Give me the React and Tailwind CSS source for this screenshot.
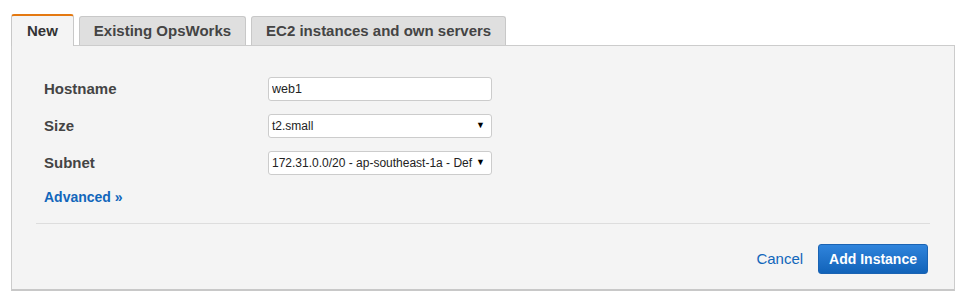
const TABS = ["New", "Existing OpsWorks", "EC2 instances and own servers"];

function Field({ label, children }) {
  return (
    <div className="flex items-center h-[24px]">
      <div className="w-[224px] text-[15px] font-bold text-[#444]">{label}</div>
      {children}
    </div>
  );
}

function Select({ value }) {
  return (
    <div className="w-[224px] h-[24px] bg-white border border-[#cccccc] rounded-[3px] flex items-center pl-[3px] pr-[6px] text-[12px] text-[#222]">
      <span className="flex-1 whitespace-nowrap">{value}</span>
      <span className="text-[9px] text-black">▼</span>
    </div>
  );
}

export default function App() {
  return (
    <div className="w-[971px] h-[303px] bg-white font-['Liberation_Sans',Arial,sans-serif]">
      {/* Tabs */}
      <div className="flex items-end gap-[5px] pl-[11px] pt-[14px]">
        {TABS.map((t, i) =>
          i === 0 ? (
            <div
              key={t}
              className="relative z-10 -mb-px h-[32px] px-[15px] flex items-center bg-[#f4f4f4] border border-b-0 border-[#c8c8c8] border-t-2 border-t-[#e47911] rounded-t-[3px] text-[15px] font-bold text-[#333]"
            >
              {t}
            </div>
          ) : (
            <div
              key={t}
              className="h-[29px] px-[14px] flex items-center bg-[#dfdfdf] border border-b-0 border-[#c8c8c8] rounded-t-[3px] text-[15px] font-bold text-[#444]"
            >
              {t}
            </div>
          )
        )}
      </div>

      {/* Panel */}
      <div className="ml-[11px] w-[944px] bg-[#f4f4f4] border border-[#cccccc] border-b-2 border-b-[#c8c8c8] px-6 pt-[31px] pb-[15px]">
        <div className="pl-2 flex flex-col gap-[13px]">
          <Field label="Hostname">
            <input
              readOnly
              value="web1"
              className="w-[224px] h-[24px] bg-white border border-[#cccccc] rounded-[3px] pl-[3px] text-[12.5px] text-[#222] outline-none"
            />
          </Field>
          <Field label="Size">
            <Select value="t2.small" />
          </Field>
          <Field label="Subnet">
            <Select value="172.31.0.0/20 - ap-southeast-1a - Def" />
          </Field>
        </div>
        <div className="pl-2 mt-[14px] h-[16px] leading-[16px]">
          <a className="text-[14px] font-bold text-[#1166bb] cursor-pointer">Advanced »</a>
        </div>

        <div className="mt-[18px] border-t border-[#dddddd]" />

        <div className="flex items-center justify-end gap-[15px] pt-[20px] pr-[2px]">
          <a className="text-[15px] text-[#1166bb] cursor-pointer">Cancel</a>
          <button className="h-[30px] px-[10px] rounded-[3px] border border-[#1a63b3] bg-gradient-to-b from-[#2f84dc] to-[#1163b9] text-white text-[14px] font-bold">
            Add Instance
          </button>
        </div>
      </div>
    </div>
  );
}
